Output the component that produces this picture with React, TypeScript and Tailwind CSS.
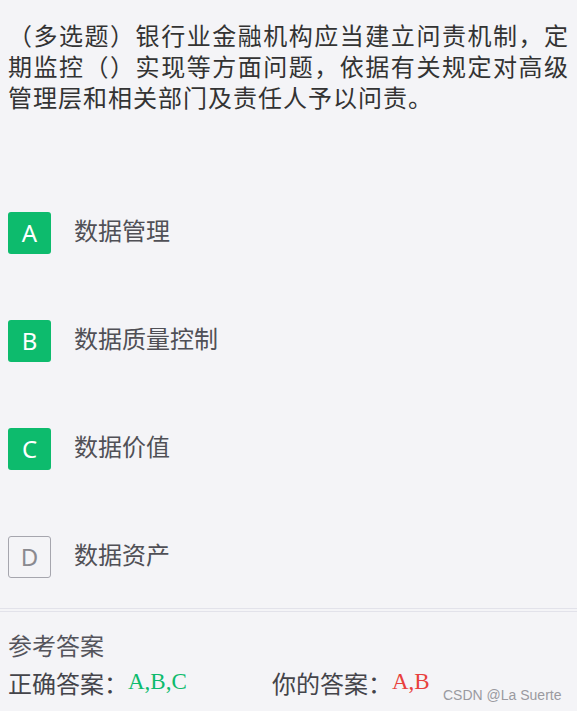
const options = [
  { key: 'A', label: '数据管理', picked: true },
  { key: 'B', label: '数据质量控制', picked: true },
  { key: 'C', label: '数据价值', picked: true },
  { key: 'D', label: '数据资产', picked: false },
];

const cjk = "font-['Noto_Sans','Noto_Sans_CJK_SC',sans-serif]";

export default function App() {
  return (
    <div className={`relative w-[577px] h-[711px] overflow-hidden bg-[#f4f4f7] ${cjk}`}>
      <div className="pt-[20px] pl-[8px] pr-[8px] text-[24px] leading-[31px] tracking-[1px] text-[#333] text-justify">
        （多选题）银行业金融机构应当建立问责机制，定期监控（）实现等方面问题，依据有关规定对高级管理层和相关部门及责任人予以问责。
      </div>

      <div className="mt-[99px] flex flex-col gap-[66px] pl-[8px]">
        {options.map((o) => (
          <div key={o.key} className="flex items-center h-[42px]">
            <div
              className={`w-[43px] h-[42px] rounded-[3px] flex items-center justify-center text-[24px] ${
                o.picked
                  ? 'bg-[#0dbb6d] text-white'
                  : 'border border-[#a6a6ae] text-[#8a8a90]'
              }`}
            >
              {o.key}
            </div>
            <span className="ml-[23px] text-[24px] text-[#505056] -translate-y-[2px]">{o.label}</span>
          </div>
        ))}
      </div>

      <div className="mt-[30px] h-px bg-[#e2e2ea]" />
      <div className="mt-[2px] h-px bg-[#e2e2ea]" />

      <div className="pl-[8px] pt-[19px] text-[24px] leading-[30px] text-[#55555c]">参考答案</div>
      <div className="pl-[8px] pt-[8px] flex items-center text-[24px] leading-[30px] text-[#44444a]">
        <span>正确答案：</span>
        <span className="w-[144px] font-['Liberation_Serif',serif] text-[23px] text-[#0dbb6d] -translate-y-[2px]">A,B,C</span>
        <span>你的答案：</span>
        <span className="font-['Liberation_Serif',serif] text-[23px] text-[#e8413c] -translate-y-[2px]">A,B</span>
      </div>

      <div className="absolute left-[443px] top-[686px] text-[14px] leading-[18px] text-[#9a9aa0] font-['Liberation_Sans',sans-serif]">
        CSDN @La Suerte
      </div>
    </div>
  );
}
